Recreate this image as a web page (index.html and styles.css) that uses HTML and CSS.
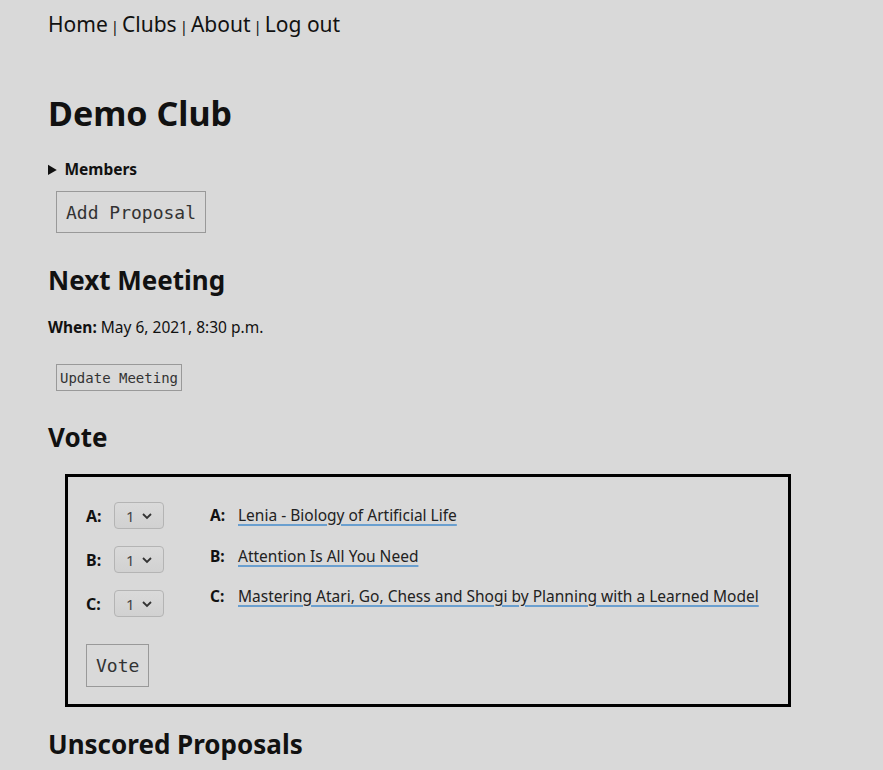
FILE: index.html
```html
<!DOCTYPE html>
<html>
<head>
<meta charset="utf-8">
<link rel="stylesheet" href="styles.css">
</head>
<body>
<nav class="nav">
  <a href="#">Home</a><span class="sep">|</span><a href="#">Clubs</a><span class="sep">|</span><a href="#">About</a><span class="sep">|</span><a href="#">Log out</a>
</nav>
<h1 class="title">Demo Club</h1>
<details class="members"><summary>Members</summary></details>
<button class="btn btn-lg">Add Proposal</button>
<h2 class="h2 h2-next">Next Meeting</h2>
<p class="when"><b>When:</b> May 6, 2021, 8:30 p.m.</p>
<button class="btn btn-sm">Update Meeting</button>
<h2 class="h2 h2-vote">Vote</h2>
<form class="vote-box">
  <div class="vote-grid">
    <div class="ranks">
      <div class="rank"><b>A:</b><span class="sel">1<svg width="12" height="8" viewBox="0 0 12 8"><path d="M2 2 L6 6 L10 2" fill="none" stroke="#333" stroke-width="1.8"/></svg></span></div>
      <div class="rank"><b>B:</b><span class="sel">1<svg width="12" height="8" viewBox="0 0 12 8"><path d="M2 2 L6 6 L10 2" fill="none" stroke="#333" stroke-width="1.8"/></svg></span></div>
      <div class="rank"><b>C:</b><span class="sel">1<svg width="12" height="8" viewBox="0 0 12 8"><path d="M2 2 L6 6 L10 2" fill="none" stroke="#333" stroke-width="1.8"/></svg></span></div>
    </div>
    <div class="papers">
      <div class="paper"><b>A:</b><a href="#">Lenia - Biology of Artificial Life</a></div>
      <div class="paper"><b>B:</b><a href="#">Attention Is All You Need</a></div>
      <div class="paper"><b>C:</b><a href="#">Mastering Atari, Go, Chess and Shogi by Planning with a Learned Model</a></div>
    </div>
  </div>
  <button class="btn btn-vote" type="button">Vote</button>
</form>
<h2 class="h2 h2-unscored">Unscored Proposals</h2>
</body>
</html>
```

FILE: styles.css
```css
html { background: #d9d9d9; }
body {
  margin: 0;
  padding: 0 0 0 48px;
  font-family: "Noto Sans", "Open Sans", sans-serif;
  color: #111;
  background: #d9d9d9;
  font-size: 16px;
}
.nav {
  padding-top: 9px;
  font-size: 21px;
  line-height: 30px;
}
.nav a { color: #111; text-decoration: none; }
.nav .sep { font-size: 15px; margin: 0 3px; color: #111; }
.title {
  font-size: 34px;
  font-weight: 700;
  margin: 50px 0 0;
  line-height: 44px;
}
.members { margin-top: 22px; }
.members summary {
  font-weight: 700;
  font-size: 15.5px;
  line-height: 24px;
  cursor: pointer;
}
.btn {
  font-family: "DejaVu Sans Mono", "Liberation Mono", monospace;
  background: #d9d9d9;
  border: 1px solid #999;
  color: #333;
  margin-left: 8px;
  display: block;
}
.btn-lg {
  margin-top: 10px;
  font-size: 18px;
  height: 42px;
  padding: 0 9px;
}
.h2 {
  font-size: 26px;
  font-weight: 700;
  margin: 0;
  line-height: 36px;
}
.h2-next { margin-top: 29px; }
.when { margin: 17px 0 0; line-height: 24px; font-size: 15.5px; }
.btn-sm {
  margin-top: 25px;
  font-size: 14px;
  height: 27px;
  padding: 0 3px;
}
.h2-vote { margin-top: 28px; }
.vote-box {
  margin: 19px 0 0 17px;
  width: 726px;
  box-sizing: border-box;
  border: 3px solid #000;
  padding: 25px 0 17px 18px;
}
.vote-grid { display: flex; gap: 46px; }
.ranks { display: flex; flex-direction: column; gap: 17px; flex: none; }
.rank { display: flex; align-items: center; gap: 13px; height: 27px; }
.rank b { width: 15px; }
.sel {
  display: inline-flex;
  align-items: center;
  gap: 6px;
  box-sizing: border-box;
  width: 50px;
  height: 27px;
  padding-left: 11px;
  border: 1px solid #b4b4b4;
  border-radius: 4px;
  background: linear-gradient(#dadada, #d1d1d1);
  font-size: 15px;
  color: #444;
}
.papers { display: flex; flex-direction: column; gap: 16.5px; padding-top: 1px; }
.paper { display: flex; gap: 11px; line-height: 24px; font-size: 15.5px; white-space: nowrap; }
.paper b { width: 17px; }
.paper a {
  color: #222;
  text-decoration: underline;
  text-decoration-color: #6a9fcf;
  text-decoration-thickness: 2px;
  text-underline-offset: 3px;
}
.btn-vote {
  margin: 27px 0 0 0;
  font-size: 18px;
  height: 43px;
  padding: 0 9px;
}
.h2-unscored { margin-top: 19px; }
```
